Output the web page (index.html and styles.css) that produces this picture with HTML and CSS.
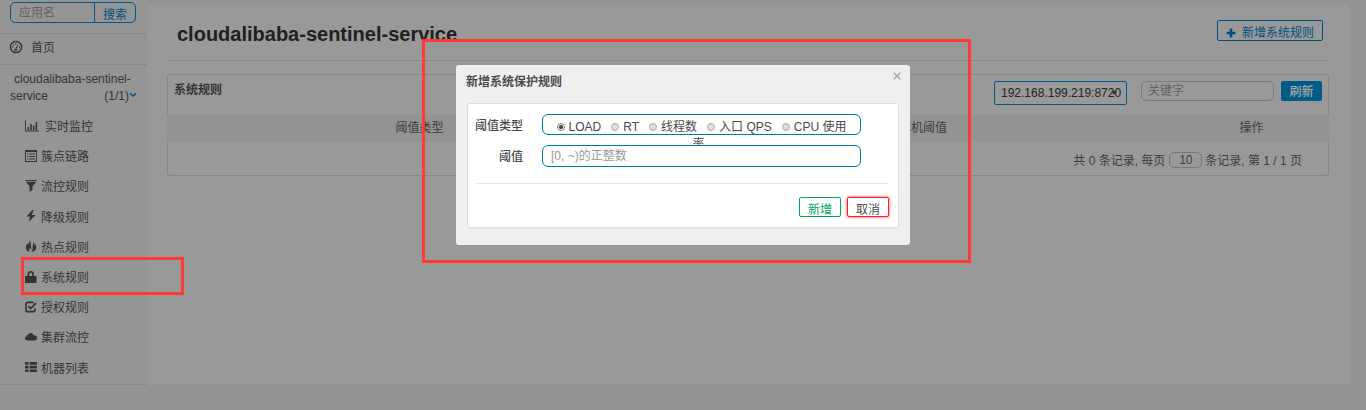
FILE: index.html
```html
<!DOCTYPE html>
<html lang="zh-CN">
<head>
<meta charset="utf-8">
<title>Sentinel</title>
<link rel="stylesheet" href="styles.css">
</head>
<body>
<div class="app">
  <aside class="sidebar">
    <div class="search"><span class="search-input">应用名</span><span class="search-btn">搜索</span></div>
    <div class="home">
      <svg class="icon" viewBox="0 0 14 14"><circle cx="7" cy="7" r="5.6" fill="none" stroke="currentColor" stroke-width="1.5"/><path d="M6.6 9.6 9 4.6" stroke="currentColor" stroke-width="1"/><path d="M5 9.200h3.600v1.300H5zM3 6.500h1.200v1.200H3zM4 4.300h1.200v1.200H4zM6.200 3.200h1.200v1.200H6.200zM9.800 6.500h1.200v1.200H9.800z"/></svg>
      <span>首页</span>
    </div>
    <div class="service">
      <div class="service-name">cloudalibaba-sentinel-</div>
      <div class="service-row"><span>service</span><span class="count">(1/1)<svg class="chev" viewBox="0 0 8 6"><path d="M1 1.2 4 4.2 7 1.2" fill="none" stroke="currentColor" stroke-width="1.3"/></svg></span></div>
    </div>
    <ul class="menu">
      <li class="wide"><svg class="icon" viewBox="0 0 14 14"><path d="M0 1.5h1v10h13v1H0zM2.5 8h1.600v3h-1.600zM5.2 5h1.600v6h-1.600zM7.9 6.5h1.600v4.5h-1.600zM10.6 3h1.600v8h-1.600z"/></svg><span>实时监控</span></li>
      <li><svg class="icon" viewBox="0 0 12 12"><path fill-rule="evenodd" d="M0 0h12v12H0zM1 2v9h10V2z"/><path d="M2 3.500h1.300v1H2zM4.200 3.500H10v1H4.200zM2 6h1.300v1H2zM4.200 6H10v1H4.200zM2 8.500h1.300v1H2zM4.200 8.500H10v1H4.200z"/></svg><span>簇点链路</span></li>
      <li><svg class="icon" viewBox="0 0 12 12"><path d="M.5 0h11v1.300H.5zM1 2h10L7.500 6.300V10L4.500 12V6.300z"/></svg><span>流控规则</span></li>
      <li><svg class="icon" viewBox="0 0 12 12"><path d="M7.600 0 1.500 6.600h3.600L3.700 12 10.500 5H6.700L8.600.4z"/></svg><span>降级规则</span></li>
      <li><svg class="icon" viewBox="0 0 12 12"><path d="M4.500.3C5 2 3.800 3.200 3 4.400L2.200 3.500C1 5 .6 6.800 1 8.600 1.500 10.500 2.800 11.700 4.600 12 3.600 10.500 4 9 5.200 7.500 5.800 8.300 5.700 10 5.400 10.700 6.400 9.800 6.600 8 6.100 6.500 5.600 4.800 6.400 2 4.500.3z"/><path d="M8.500 1.500C9.200 3 7.400 5 7.600 6.700 7.800 8.300 7.700 10.500 6.200 12 9.500 11.700 11.500 9.500 11.300 7 11.100 5.500 10.600 4.600 9.900 3.800c.1 1 0 1.400-.5 1.800.2-1.500.1-3-.9-4.100z"/></svg><span>热点规则</span></li>
      <li class="active"><svg class="icon" viewBox="0 0 12 12"><path fill-rule="evenodd" d="M2.500 5V3.300C2.500-1 9-1 9 3.300V5h1.900l.6.600V12H0V5.600L.6 5zM4.200 5h3.100V3.300C7.300 1.100 4.200 1.100 4.200 3.300z"/></svg><span>系统规则</span></li>
      <li><svg class="icon" viewBox="0 0 12 12"><path d="M8.500 1.300H3A2 2 0 0 0 1 3.300v5.400a2 2 0 0 0 2 2h5a2 2 0 0 0 2-2V7.500" fill="none" stroke="currentColor" stroke-width="1.7"/><path d="M3.300 5.200 5.700 7.500 11 2.200" fill="none" stroke="currentColor" stroke-width="1.8"/></svg><span>授权规则</span></li>
      <li><svg class="icon" viewBox="0 0 12 12"><path d="M2.600 9.500C.8 9.500 0 8.500 0 7.300 0 6 .8 5.400 1.700 5.200 1.600 4 2.600 3.200 3.500 3.500 4.200 1.500 7.800 1 8.500 4.300 10.500 3.900 12 5 12 6.800 12 8.600 11 9.500 9.500 9.500z"/></svg><span>集群流控</span></li>
      <li><svg class="icon" viewBox="0 0 12 12"><path d="M0 1h3.500v2.700H0zM4.500 1H12v2.700H4.500zM0 4.700h3.500v2.700H0zM4.500 4.700H12v2.700H4.500zM0 8.400h3.500v2.700H0zM4.500 8.400H12v2.700H4.500z"/></svg><span>机器列表</span></li>
    </ul>
  </aside>
  <main class="content">
    <header class="page-head">
      <h1>cloudalibaba-sentinel-service</h1>
      <span class="add-btn"><svg class="plus" viewBox="0 0 10 10"><path d="M3.7.5h2.600v3.200h3.200v2.600H6.300v3.200H3.700V6.300H.5V3.700h3.200z"/></svg>新增系统规则</span>
    </header>
    <section class="card">
      <div class="card-head">
        <b>系统规则</b>
        <div class="select">192.168.199.219:8720<i class="arrow"></i></div>
        <div class="keyword">关键字</div>
        <div class="refresh">刷新</div>
      </div>
      <div class="thead"><span>阈值类型</span><span>单机阈值</span><span>操作</span></div>
      <div class="pager"><span>共 0 条记录, 每页</span><span class="size">10</span><span>条记录, 第 1 / 1 页</span></div>
    </section>
  </main>
</div>
<div class="menu-mark"></div>
<div class="modal-mark">
  <div class="modal">
    <div class="modal-title"><b>新增系统保护规则</b><svg class="close" viewBox="0 0 8 8"><path d="M.7.7l6.6 6.6M7.3.7.7 7.3" stroke="currentColor" stroke-width="1.5"/></svg></div>
    <div class="panel">
      <div class="field"><label>阈值类型</label>
        <div class="control radios">
          <span class="opt"><i class="radio on"></i>LOAD</span><span class="opt"><i class="radio"></i>RT</span><span class="opt"><i class="radio"></i>线程数</span><span class="opt"><i class="radio"></i>入口 QPS</span><span class="opt"><i class="radio"></i>CPU 使用</span>
          <span class="wrap">率</span>
        </div>
      </div>
      <div class="field"><label>阈值</label><div class="control text">[0, ~)的正整数</div></div>
      <div class="actions"><span class="ok">新增</span><span class="cancel">取消</span></div>
    </div>
  </div>
</div>
</body>
</html>
```

FILE: styles.css
```css
* { box-sizing: border-box; }
body {
  margin: 0;
  height: 410px;
  overflow: hidden;
  background: #949494;
  color: #343434;
  font: 12px/18px "Liberation Sans", "Noto Sans CJK SC", sans-serif;
  white-space: nowrap;
}
svg { fill: currentColor; display: block; flex: none; }
.app { display: flex; height: 385px; }

.sidebar { width: 147px; background: #959595; border-bottom: 1px solid #888; }
.search { display: flex; width: 126px; height: 21px; margin: 2px 0 0 10px; border: 1px solid #00598a; border-radius: 5px; overflow: hidden; }
.search-input { width: 83px; padding-left: 8px; line-height: 21px; color: #626262; }
.search-btn { flex: 1; border-left: 1px solid #00598a; color: #00507c; text-align: center; line-height: 24px; }
.home { display: flex; align-items: center; height: 32px; margin-top: 10px; padding: 0 0 3px 9px; border: solid #888; border-width: 1px 0; gap: 8px; }
.home .icon { width: 14px; height: 14px; margin-top: -1px; }
.service { padding: 6px 10px 0; height: 46px; line-height: 17px; }
.service-name { padding-left: 4px; }
.service-row { display: flex; justify-content: space-between; }
.count { display: flex; align-items: center; }
.chev { width: 8px; height: 6px; color: #004f7b; margin-top: -4px; }
.menu { list-style: none; margin: 0; padding: 0; }
.menu li { display: flex; align-items: center; height: 30.2px; padding-left: 25px; gap: 4px; }
.menu li span { padding-top: 2px; }
.menu .icon { width: 12px; height: 12px; margin-top: -1px; }
.menu .wide { gap: 6px; }
.menu .wide .icon { width: 14px; height: 14px; }

.content { width: 1202px; margin-top: 5px; height: 379px; padding: 0 20px; background: #999; }
.page-head { display: flex; justify-content: space-between; height: 56px; border-bottom: 1px solid #888; padding: 15px 6px 0 10px; }
h1 { margin: 0; font-size: 20px; line-height: 28px; color: #202020; }
.add-btn { display: flex; align-items: center; gap: 6px; width: 106px; height: 21px; padding: 4px 0 0 8px; border: 1px solid #00507c; border-radius: 2px; color: #00507c; }
.plus { width: 10px; height: 10px; }
.card { margin-top: 13px; height: 102px; border: 1px solid #868686; border-radius: 3px; }
.card-head { display: flex; height: 40px; padding: 6px 6px 0; }
.card-head b { flex: 1; line-height: 18px; }
.select { position: relative; width: 133px; height: 24px; border: 1px solid #00598a; border-radius: 2px; padding-left: 6px; line-height: 22px; color: #222; }
.arrow { position: absolute; right: 9px; top: 9px; border: 3px solid transparent; border-top: 4px solid #333; border-bottom: 0; }
.keyword { width: 133px; height: 20px; margin: 0 7px 0 14px; border: 1px solid #7b7b7b; border-radius: 5px; padding-left: 6px; line-height: 18px; color: #626262; }
.refresh { width: 41px; height: 20px; border-radius: 2px; background: #005b87; color: #aaa; text-align: center; line-height: 23px; font-weight: 500; }
.thead { display: grid; grid-template-columns: 505px 1fr 155px; height: 27px; margin: 0 -1px; background: #929394; text-align: center; line-height: 27px; color: #3c3c3c; }
.pager { display: flex; justify-content: flex-end; height: 33px; padding: 10px 26px 0 0; color: #3c3c3c; }
.size { width: 33px; height: 16px; margin: 0 3px 0 4px; border: 1px solid #777; border-radius: 5px; text-align: center; line-height: 15px; align-self: flex-start; }

.menu-mark { position: absolute; left: 21px; top: 257px; width: 163px; height: 38px; border: 3px solid #ff3936; }
.modal-mark { position: absolute; left: 422px; top: 39px; width: 549px; height: 224px; border: 3px solid #ff3936; padding: 23px 0 0 31px; }
.modal { width: 454px; height: 180px; border-radius: 3px; background: #efefef; padding: 0 11px; color: #4a4a4a; }
.modal-title { display: flex; justify-content: space-between; height: 38px; padding-top: 8px; margin-left: -1px; margin-right: -2px; }
.close { width: 8px; height: 8px; color: #aaa; margin-top: -1px; }
.panel { height: 125px; border: 1px solid #dcdcdc; border-radius: 3px; background: #fff; padding: 10px 9px 0 0; }
.field { display: flex; height: 31px; }
.field label { width: 55px; margin-right: 19px; text-align: right; line-height: 24px; font-weight: 500; }
.control { width: 319px; border: 1px solid #0079b6; border-radius: 6px; }
.radios { display: flex; flex-wrap: wrap; justify-content: center; align-content: flex-start; height: 21px; line-height: 24px; column-gap: 10px; }
.opt { display: flex; align-items: center; gap: 4px; height: 24px; }
.radio { width: 8px; height: 8px; border: 1px solid #aaa; border-radius: 50%; background: #ddd; }
.radio.on { background: radial-gradient(circle, #444 0 1.5px, #ddd 2.2px); border-color: #888; }
.wrap { width: 100%; height: 16px; margin-top: -5px; padding-right: 6px; text-align: center; overflow: hidden; line-height: 21px; }
.control.text { position: relative; height: 22px; background: #fff; padding-left: 8px; line-height: 20px; color: #999; }
.actions { display: flex; justify-content: flex-end; gap: 6px; margin: 7px 0 0 9px; padding-top: 13px; border-top: 1px solid #e5e5e5; line-height: 24px; text-align: center; }
.actions span { height: 20px; border: 1px solid #00a854; border-radius: 2px; width: 42px; overflow: hidden; }
.ok { color: #00a854; }
.actions .cancel { width: 42px; border-color: #f5222d; overflow: visible; box-shadow: 0 0 2px 1px #f99; }
```
